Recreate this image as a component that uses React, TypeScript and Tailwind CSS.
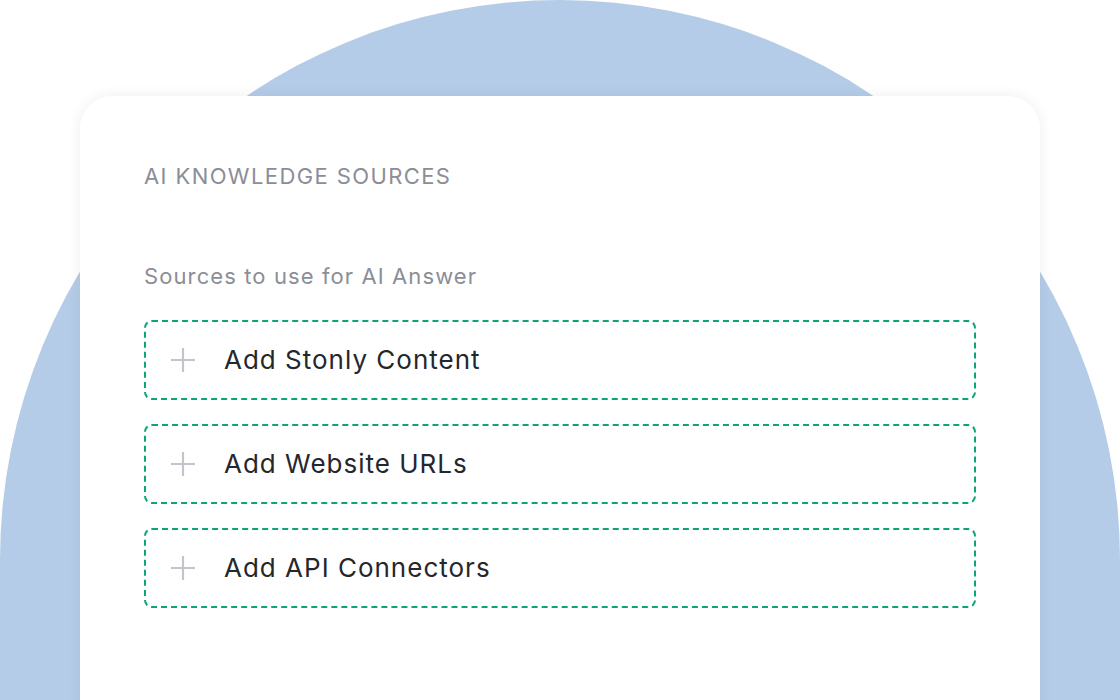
import React from "react";

const items = ["Add Stonly Content", "Add Website URLs", "Add API Connectors"];

function Plus() {
  return (
    <svg width="26" height="26" viewBox="0 0 26 26" fill="none" className="shrink-0">
      <path d="M13 1v24M1 13h24" stroke="#c3c5ca" strokeWidth="2.2" />
    </svg>
  );
}

export default function App() {
  return (
    <div
      className="relative w-[1120px] h-[700px] overflow-hidden bg-white"
      style={{ fontFamily: "Inter, 'Noto Sans', sans-serif" }}
    >
      <div className="absolute left-0 top-0 w-[1120px] h-[1200px] rounded-t-[560px] bg-[#b5cce8]" />
      <div className="relative mx-[80px] mt-[96px] h-[640px] rounded-[32px] bg-white shadow-[0_0_14px_rgba(0,0,0,0.07)] px-[64px] pt-[65px]">
        <div className="text-[22px] leading-[30px] tracking-[1.4px] text-[#8b8e96] uppercase">
          AI Knowledge Sources
        </div>
        <div className="mt-[70px] text-[22px] leading-[30px] tracking-[1.1px] text-[#8b8e96]">
          Sources to use for AI Answer
        </div>
        <div className="mt-[29px] flex flex-col gap-[24px]">
          {items.map((t) => (
            <div
              key={t}
              className="h-[80px] flex items-center gap-[28px] pl-[24px] rounded-[8px] border-2 border-dashed border-[#0ea47b]"
            >
              <Plus />
              <span className="text-[26px] leading-[32px] text-[#25272c] tracking-[1px]">{t}</span>
            </div>
          ))}
        </div>
      </div>
    </div>
  );
}
